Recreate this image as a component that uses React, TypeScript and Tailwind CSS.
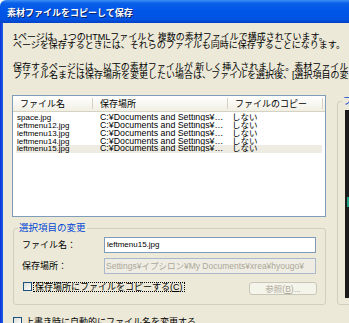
import React from "react";

const files = ["space.jpg", "leftmenu12.jpg", "leftmenu13.jpg", "leftmenu14.jpg", "leftmenu15.jpg"];
const savePath = "C:¥Documents and Settings¥イプシロン¥My Documents¥xrea¥hyougo¥";

function Checkbox() {
  return (
    <span className="block w-[9px] h-[9px] shrink-0 border border-[#1c5180] bg-[linear-gradient(135deg,#dcdcd7,#ffffff)]" />
  );
}

function HeadSep() {
  return <span className="block w-px h-[11px] shrink-0 bg-[#d6d2c2]" />;
}

export default function App() {
  return (
    <div className="w-[349px] h-[323px] overflow-hidden bg-white flex flex-col font-['Liberation_Sans','Noto_Sans_CJK_JP',sans-serif] text-black">
      {/* title bar */}
      <div className="h-[23px] shrink-0 rounded-tl-[6px] bg-[linear-gradient(180deg,#3d8ff7_0%,#0a5fe8_14%,#0056e8_45%,#0052e2_85%,#0441c4_100%)] pl-[7px] pt-[2px] flex items-center">
        <span className="text-white font-bold text-[9px] leading-[10px] [text-shadow:1px_1px_0_#0a246a] whitespace-nowrap">
          素材ファイルをコピーして保存
        </span>
      </div>

      <div className="flex flex-1 min-h-0 bg-[#ece9d8]">
        <div className="w-[3px] shrink-0 bg-[linear-gradient(90deg,#0831d9,#1d62e8)]" />
        <div className="flex-1 min-w-0 pl-[9px] flex flex-col overflow-hidden">
          <p className="ml-[1px] mt-[10px] text-[9px] leading-[8px] whitespace-nowrap">
            1ページは、1つのHTMLファイルと 複数の素材ファイルで構成されています。
            <br />
            ページを保存するときには、それらのファイルも同時に保存することになります。
          </p>
          <p className="ml-[1px] mt-[14px] text-[9px] leading-[8px] whitespace-nowrap">
            保存するページには、以下の素材ファイルが 新しく挿入されました。素材ファイルを
            <br />
            ファイル名または保存場所を変更したい場合は、ファイルを選択後、[選択項目の変
          </p>

          <div className="mt-[16px] flex">
            <div className="w-[314px] shrink-0 flex flex-col">
              {/* file list */}
              <div className="h-[122px] border border-[#7f9db9] bg-white overflow-hidden">
                <div className="h-[16px] flex items-center bg-[linear-gradient(180deg,#ffffff,#f1efe4)] border-b border-[#d6d2c2] text-[9px] leading-[10px] whitespace-nowrap">
                  <div className="w-[79px] pl-[7px]">ファイル名</div>
                  <HeadSep />
                  <div className="w-[134px] pl-[7px]">保存場所</div>
                  <HeadSep />
                  <div className="w-[94px] pl-[7px]">ファイルのコピー</div>
                  <HeadSep />
                </div>
                <div className="pt-[2px]">
                  {files.map((f, i) => (
                    <div
                      key={f}
                      className={
                        "mx-[3px] h-[7.75px] flex items-center leading-[7px] whitespace-nowrap " +
                        (i === files.length - 1 ? "bg-[#eeece2]" : "")
                      }
                    >
                      <div className="w-[84px] shrink-0 pl-[1px] text-[8px] leading-[7px]">{f}</div>
                      <div className="w-[132px] shrink-0 pr-[6px] overflow-hidden">
                        <div className="truncate text-[8.8px] leading-[7px]">{savePath + f}</div>
                      </div>
                      <div className="text-[8.5px] leading-[7px]">しない</div>
                    </div>
                  ))}
                </div>
              </div>

              {/* selected item group */}
              <fieldset className="mt-[6px] ml-[1px] w-[313px] border border-[#d0d0bf] rounded-[3px] pb-[9px]">
                <legend className="ml-[4px] px-[1px] text-[9.5px] leading-[10px] text-[#0046d5] whitespace-nowrap">
                  選択項目の変更
                </legend>
                <div className="pl-[8px] pr-[8px] flex flex-col">
                  <div className="mt-[4px] flex items-center">
                    <span className="w-[82px] text-[9px] leading-[10px]">ファイル名：</span>
                    <div className="w-[212px] h-[16px] border border-[#7f9db9] bg-white pl-[2px] flex items-center text-[8px] leading-[8px]">
                      leftmenu15.jpg
                    </div>
                  </div>
                  <div className="mt-[5px] flex items-center">
                    <span className="w-[82px] text-[9px] leading-[10px]">保存場所：</span>
                    <div className="w-[212px] h-[16px] border border-[#a9b8cb] bg-[#efede3] pl-[1px] flex items-center text-[8.5px] leading-[8px] text-[#aca899] whitespace-nowrap overflow-hidden">
                      Settings¥イプシロン¥My Documents¥xrea¥hyougo¥
                    </div>
                  </div>
                  <div className="mt-[8px] flex items-start">
                    <div className="ml-[1px]">
                      <Checkbox />
                    </div>
                    <span className="ml-px h-[10px] border border-dotted border-black px-[1px] text-[9px] leading-[8px] whitespace-nowrap">
                      保存場所にファイルをコピーする(<span className="underline">C</span>)
                    </span>
                    <button className="ml-auto w-[68px] h-[13px] rounded-[3px] border border-[#c9c7ba] bg-[#f5f4ea] text-[8.5px] leading-[10px] text-[#aca899] whitespace-nowrap">
                      参照(<span className="underline">B</span>)...
                    </button>
                  </div>
                </div>
              </fieldset>

              <div className="mt-[12px] ml-[1px] flex items-start">
                <Checkbox />
                <span className="ml-[3px] text-[9px] leading-[10px] whitespace-nowrap">
                  上書き時に自動的にファイル名を変更する
                </span>
              </div>
            </div>

            {/* preview group */}
            <fieldset className="ml-[11px] mt-[1px] w-[120px] h-[209px] shrink-0 border border-[#d0d0bf] rounded-[3px]">
              <legend className="ml-[4px] px-[1px] text-[9.5px] leading-[10px] text-[#0046d5] whitespace-nowrap">
                プレビュー
              </legend>
              <div className="ml-[7px] mt-[4px] h-[188px] bg-[#1b1b1b] flex flex-col">
                <div className="mt-[87px] ml-[2px] w-[10px] h-[10px] bg-[#1f9f80]" />
              </div>
            </fieldset>
          </div>
        </div>
      </div>
    </div>
  );
}
